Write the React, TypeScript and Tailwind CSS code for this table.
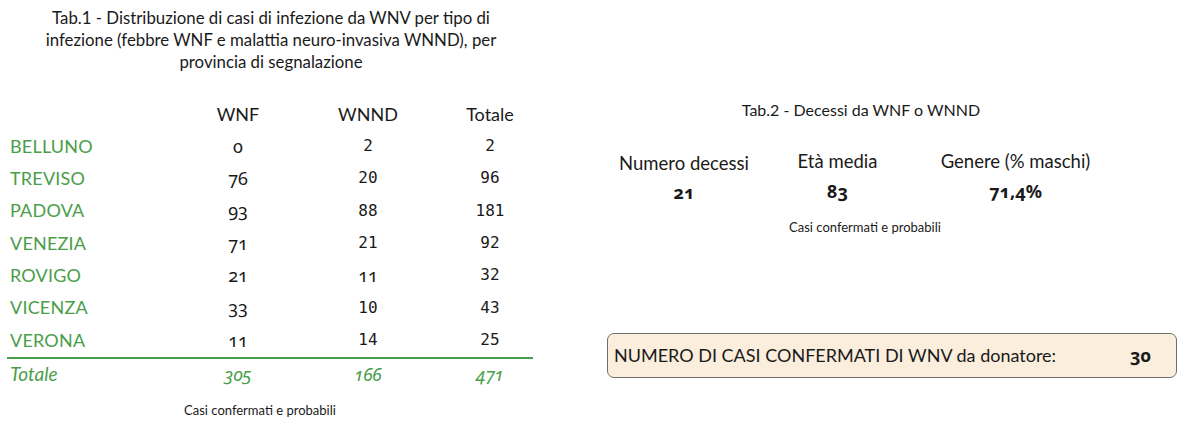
const rows = [
  { name: "BELLUNO", wnf: "0", wnnd: "2", tot: "2" },
  { name: "TREVISO", wnf: "76", wnnd: "20", tot: "96" },
  { name: "PADOVA", wnf: "93", wnnd: "88", tot: "181" },
  { name: "VENEZIA", wnf: "71", wnnd: "21", tot: "92" },
  { name: "ROVIGO", wnf: "21", wnnd: "11", tot: "32", oldWnnd: true },
  { name: "VICENZA", wnf: "33", wnnd: "10", tot: "43" },
  { name: "VERONA", wnf: "11", wnnd: "14", tot: "25" },
];

const sans = "font-['Lato','Open_Sans',sans-serif]";
const mono = "font-['DejaVu_Sans_Mono',monospace] text-[16px]";
const old = "font-['Noto_Sans',sans-serif] oldstyle-nums text-[18px]";

export default function App() {
  return (
    <div className={`w-[1200px] h-[429px] bg-white text-[#1a1a1a] flex ${sans}`}>
      {/* Tab.1 */}
      <div className="w-[600px] pl-[7px] pt-[7px]">
        <h2 className="w-[528px] text-center text-[16.8px] leading-[22px] px-[20px]">
          Tab.1 - Distribuzione di casi di infezione da WNV per tipo di infezione (febbre WNF e
          malattia neuro-invasiva WNND), per provincia di segnalazione
        </h2>

        <div className="mt-[25px] grid grid-cols-[168px_126px_134px_110px] items-center text-[18px]">
          <div className="h-[32px]" />
          <div className="text-center">WNF</div>
          <div className="text-center">WNND</div>
          <div className="text-center">Totale</div>

          {rows.map((r) => (
            <div key={r.name} className="contents">
              <div className="h-[32.33px] flex items-center pl-[3px] text-[#4a9e4a] tracking-[0.2px]">
                {r.name}
              </div>
              <div className={`text-center ${old}`}>{r.wnf}</div>
              <div className={`text-center ${r.oldWnnd ? old : mono}`}>{r.wnnd}</div>
              <div className={`text-center ${mono}`}>{r.tot}</div>
            </div>
          ))}
        </div>

        <div className="w-[526px] h-[2px] bg-[#4a9e4a] mt-[1px]" />

        <div className="grid grid-cols-[168px_126px_134px_110px] items-center italic text-[#4a9e4a] text-[19px] h-[30px]">
          <div className="pl-[3px]">Totale</div>
          <div className={`text-center ${old}`}>305</div>
          <div className={`text-center ${old}`}>166</div>
          <div className={`text-center ${old}`}>471</div>
        </div>

        <p className="mt-[12px] w-[506px] text-center text-[13px]">Casi confermati e probabili</p>
      </div>

      {/* Tab.2 */}
      <div className="flex-1 pt-[100px] pl-[7px]">
        <h2 className="w-[508px] text-center text-[16px] leading-[20px]">
          Tab.2 - Decessi da WNF o WNND
        </h2>

        <div className="mt-[29px] flex">
          <div className="w-[154px] flex flex-col items-center">
            <span className="text-[18.5px] leading-[24px] mt-[2px]">Numero decessi</span>
            <span className={`font-bold mt-[4px] ${old}`}>21</span>
          </div>
          <div className="w-[153px] flex flex-col items-center">
            <span className="text-[18.5px] leading-[24px]">Età media</span>
            <span className={`font-bold mt-[5px] ${old}`}>83</span>
          </div>
          <div className="w-[203px] flex flex-col items-center">
            <span className="text-[18.5px] leading-[24px]">Genere (% maschi)</span>
            <span className={`font-bold mt-[5px] ${old}`}>71,4%</span>
          </div>
        </div>

        <p className="mt-[12px] w-[516px] text-center text-[13px]">Casi confermati e probabili</p>

        <div className="mt-[95px] w-[570px] h-[45px] rounded-[7px] border-[1.5px] border-[#6e6e6e] bg-[#fbeedd] flex items-center pl-[6px] pr-[25px]">
          <span className="flex-1 text-[18px]">NUMERO DI CASI CONFERMATI DI WNV da donatore:</span>
          <span className={`font-bold ${old}`}>30</span>
        </div>
      </div>
    </div>
  );
}
